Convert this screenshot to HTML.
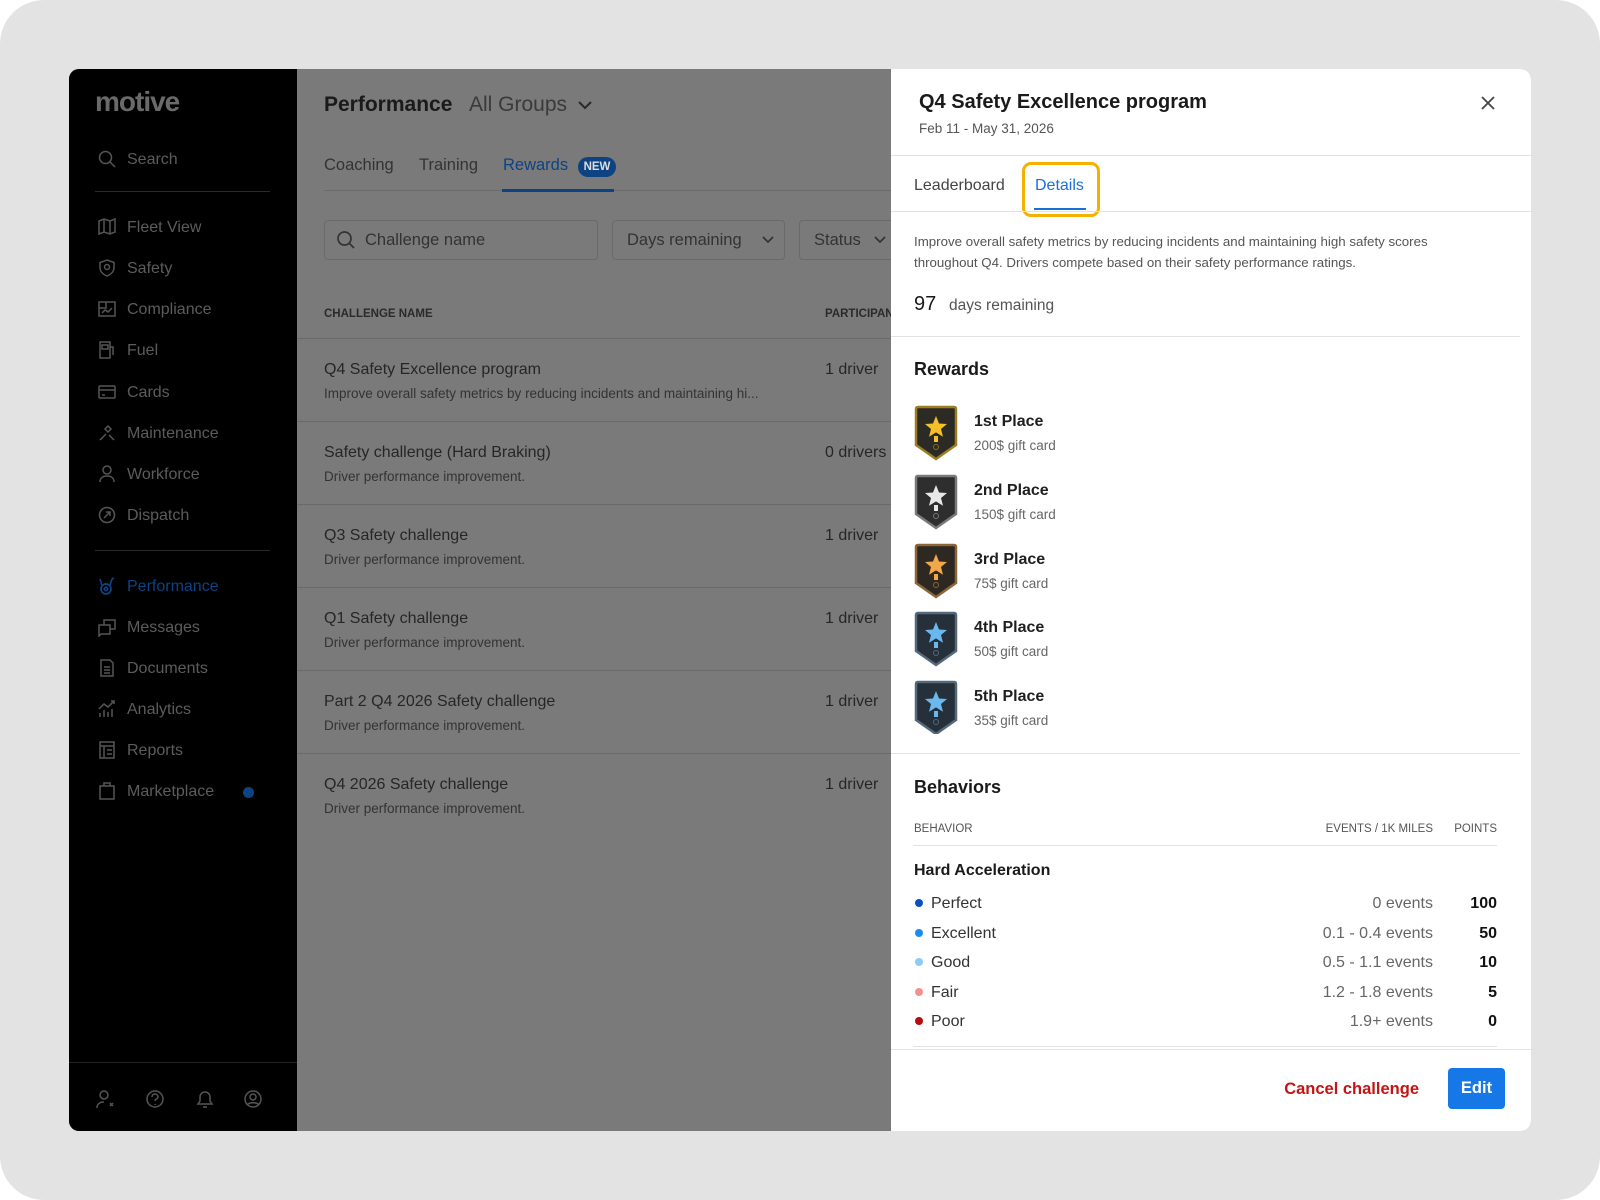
<!DOCTYPE html>
<html><head><meta charset="utf-8"><style>
*{margin:0;padding:0;box-sizing:border-box}
body{width:1600px;height:1200px;background:#fff;font-family:"Liberation Sans",sans-serif;position:relative;overflow:hidden}
.bg{position:absolute;left:0;top:0;width:1600px;height:1200px;background:#e3e3e3;border-radius:44px}
.frame{position:absolute;left:69px;top:69px;width:1462px;height:1062px;border-radius:10px;overflow:hidden;background:#7a7a7a}
.a{position:absolute;white-space:nowrap}
.side{position:absolute;left:0;top:0;width:228px;height:1062px;background:#000}
.nav{position:absolute;left:28px;width:190px;font-size:16px;color:#5c5c5c;line-height:20px;height:20px;white-space:nowrap}
.nav svg{position:absolute;left:0;top:0;width:20px;height:20px;fill:none;stroke:#555;stroke-width:1.5}
.nav span{position:absolute;left:30px;top:1px;white-space:nowrap}
.main{position:absolute;left:228px;top:0;width:594px;height:1062px;background:#7a7a7a;color:#262626}
.panel{position:absolute;left:822px;top:0;width:640px;height:1062px;background:#fff;color:#1f1f1f}
.rt{font-size:16px;color:#262626}
.rd{font-size:13.5px;color:#333}
.pl{font-size:16px;font-weight:bold;color:#1f1f1f}
.gc{font-size:13.5px;color:#666}
.br{position:absolute;font-size:16px;color:#333;line-height:20px}
.dot{position:absolute;width:8px;height:8px;border-radius:50%}
</style></head><body>
<div class="bg"></div>
<div class="frame">
 <div class="side">
  <div class="a" style="left:26px;top:17px;font-size:28px;font-weight:bold;color:#6a6a6a;letter-spacing:-1px">motive</div>
  <div class="nav" style="top:80px"><svg viewBox="0 0 20 20"><circle cx="8.5" cy="8.5" r="6"/><path d="M13 13l5 5"/></svg><span>Search</span></div>
  <div class="a" style="left:26px;top:122px;width:175px;height:1px;background:#2a2a2a"></div>
  <div class="nav" style="top:148px"><svg viewBox="0 0 20 20"><path d="M2 4l5-2 6 2 5-2v13l-5 2-6-2-5 2z M7 2v13 M13 4v13"/></svg><span>Fleet View</span></div>
  <div class="nav" style="top:189px"><svg viewBox="0 0 20 20"><path d="M10 2l7 2.5v5c0 4-3 7-7 8.5-4-1.5-7-4.5-7-8.5v-5z"/><circle cx="10" cy="9" r="2.5"/></svg><span>Safety</span></div>
  <div class="nav" style="top:230px"><svg viewBox="0 0 20 20"><rect x="2" y="3" width="16" height="14"/><path d="M2 9h7V3 M5 14l3-3 3 2 4-4"/></svg><span>Compliance</span></div>
  <div class="nav" style="top:271px"><svg viewBox="0 0 20 20"><path d="M3 2h10v16H3z M13 7h3v8 M5 5h6v4H5z"/></svg><span>Fuel</span></div>
  <div class="nav" style="top:313px"><svg viewBox="0 0 20 20"><rect x="2" y="4" width="16" height="12" rx="1"/><path d="M2 8h16 M5 13h3"/></svg><span>Cards</span></div>
  <div class="nav" style="top:354px"><svg viewBox="0 0 20 20"><path d="M3 17l6-6 M11 3l3 3-3 3-3-3z M12 12l5 5"/></svg><span>Maintenance</span></div>
  <div class="nav" style="top:395px"><svg viewBox="0 0 20 20"><circle cx="10" cy="6" r="4"/><path d="M3 18c0-4 3-6 7-6s7 2 7 6"/></svg><span>Workforce</span></div>
  <div class="nav" style="top:436px"><svg viewBox="0 0 20 20"><circle cx="10" cy="10" r="7.5"/><path d="M7 13l6-6 M9 7h4v4"/></svg><span>Dispatch</span></div>
  <div class="a" style="left:26px;top:481px;width:175px;height:1px;background:#2a2a2a"></div>
  <div class="nav" style="top:507px;color:#0d4383"><svg viewBox="0 0 20 20" style="stroke:#0d4383;stroke-width:1.7"><circle cx="9" cy="13" r="5"/><circle cx="9" cy="13" r="1.6"/><path d="M5 9L3 3 M13 9l2-6 M15 3l2-1"/></svg><span>Performance</span></div>
  <div class="nav" style="top:548px"><svg viewBox="0 0 20 20"><path d="M2 8h11v9H4l-2 2z M7 8V3h11v9h-5"/></svg><span>Messages</span></div>
  <div class="nav" style="top:589px"><svg viewBox="0 0 20 20"><path d="M4 2h9l3 3v13H4z M7 9h6 M7 12h6 M7 15h6"/></svg><span>Documents</span></div>
  <div class="nav" style="top:630px"><svg viewBox="0 0 20 20"><path d="M3 18v-4 M7 18v-7 M11 18v-5 M15 18v-8 M2 10l5-5 4 3 6-6 M14 2h3v3"/></svg><span>Analytics</span></div>
  <div class="nav" style="top:671px"><svg viewBox="0 0 20 20"><rect x="3" y="2" width="14" height="16"/><path d="M3 6h14 M7 6v12 M10 10h5 M10 14h5"/></svg><span>Reports</span></div>
  <div class="nav" style="top:712px"><svg viewBox="0 0 20 20"><path d="M3 5h14v13H3z M7 5V2h6v3"/></svg><span>Marketplace</span></div>
  <div class="dot" style="left:174px;top:718px;width:11px;height:11px;background:#0d4383"></div>
  <div class="a" style="left:0;top:993px;width:228px;height:1px;background:#222"></div>
  <svg width="200" height="24" style="position:absolute;left:26px;top:1019px" fill="none" stroke="#555" stroke-width="1.5">
   <circle cx="9" cy="7" r="4"/><path d="M2 20c0-4 3-6 7-6 M15 15l3 3 M18 15l-3 3"/>
   <circle cx="60" cy="11" r="8"/><path d="M57 9c0-2 1.5-3 3-3s3 1 3 3-3 2-3 4 M60 16v1"/>
   <path d="M103 16h14l-2-3v-4a5 5 0 0 0-10 0v4z M108 19h4"/>
   <circle cx="158" cy="11" r="8"/><circle cx="158" cy="9" r="3"/><path d="M152 17c2-3 10-3 12 0"/>
  </svg>
 </div>
 <div class="main">
  <div class="a" style="left:27px;top:24px;font-size:21px;font-weight:bold;color:#1a1a1a">Performance</div>
  <div class="a" style="left:172px;top:24px;font-size:21px;color:#3a3a3a">All Groups</div>
  <svg style="position:absolute;left:280px;top:30px" width="16" height="12" fill="none" stroke="#2a2a2a" stroke-width="2"><path d="M2 3l6 6 6-6"/></svg>
  <div class="a" style="left:27px;top:87px;font-size:16.5px;color:#333">Coaching</div>
  <div class="a" style="left:122px;top:87px;font-size:16.5px;color:#333">Training</div>
  <div class="a" style="left:206px;top:87px;font-size:16.5px;color:#0d4383">Rewards</div>
  <div class="a" style="left:281px;top:88px;width:38px;height:20px;border-radius:10px;background:#0d4383;color:#ddd;font-size:11.5px;font-weight:bold;text-align:center;line-height:20px">NEW</div>
  <div class="a" style="left:27px;top:121px;width:567px;height:1px;background:#6a6a6a"></div>
  <div class="a" style="left:205px;top:120px;width:112px;height:3px;background:#0d4383"></div>
  <div class="a" style="left:27px;top:151px;width:274px;height:40px;border:1px solid #6a6a6a;border-radius:4px"></div>
  <svg style="position:absolute;left:39px;top:161px" width="20" height="20" fill="none" stroke="#333" stroke-width="1.7"><circle cx="8.5" cy="8.5" r="6.5"/><path d="M13 13l5 5"/></svg>
  <div class="a" style="left:68px;top:162px;font-size:16.5px;color:#333">Challenge name</div>
  <div class="a" style="left:315px;top:151px;width:173px;height:40px;border:1px solid #6a6a6a;border-radius:4px"></div>
  <div class="a" style="left:330px;top:162px;font-size:16.5px;color:#333">Days remaining</div>
  <svg style="position:absolute;left:464px;top:166px" width="14" height="10" fill="none" stroke="#333" stroke-width="1.7"><path d="M2 2l5 5 5-5"/></svg>
  <div class="a" style="left:502px;top:151px;width:120px;height:40px;border:1px solid #6a6a6a;border-radius:4px"></div>
  <div class="a" style="left:517px;top:162px;font-size:16.5px;color:#333">Status</div>
  <svg style="position:absolute;left:576px;top:166px" width="14" height="10" fill="none" stroke="#333" stroke-width="1.7"><path d="M2 2l5 5 5-5"/></svg>
  <div class="a" style="left:27px;top:239px;font-size:11.5px;font-weight:bold;color:#2a2a2a">CHALLENGE NAME</div>
  <div class="a" style="left:528px;top:239px;font-size:11.5px;font-weight:bold;color:#2a2a2a">PARTICIPAN</div>
  <div class="a" style="left:0;top:269px;width:594px;height:1px;background:#6a6a6a"></div>

  <div class="a rt" style="left:27px;top:292px">Q4 Safety Excellence program</div>
  <div class="a rd" style="left:27px;top:317px">Improve overall safety metrics by reducing incidents and maintaining hi...</div>
  <div class="a rt" style="left:528px;top:292px">1 driver</div>
  <div class="a" style="left:0;top:352px;width:594px;height:1px;background:#6a6a6a"></div>
  <div class="a rt" style="left:27px;top:375px">Safety challenge (Hard Braking)</div>
  <div class="a rd" style="left:27px;top:400px">Driver performance improvement.</div>
  <div class="a rt" style="left:528px;top:375px">0 drivers</div>
  <div class="a" style="left:0;top:435px;width:594px;height:1px;background:#6a6a6a"></div>
  <div class="a rt" style="left:27px;top:458px">Q3 Safety challenge</div>
  <div class="a rd" style="left:27px;top:483px">Driver performance improvement.</div>
  <div class="a rt" style="left:528px;top:458px">1 driver</div>
  <div class="a" style="left:0;top:518px;width:594px;height:1px;background:#6a6a6a"></div>
  <div class="a rt" style="left:27px;top:541px">Q1 Safety challenge</div>
  <div class="a rd" style="left:27px;top:566px">Driver performance improvement.</div>
  <div class="a rt" style="left:528px;top:541px">1 driver</div>
  <div class="a" style="left:0;top:601px;width:594px;height:1px;background:#6a6a6a"></div>
  <div class="a rt" style="left:27px;top:624px">Part 2 Q4 2026 Safety challenge</div>
  <div class="a rd" style="left:27px;top:649px">Driver performance improvement.</div>
  <div class="a rt" style="left:528px;top:624px">1 driver</div>
  <div class="a" style="left:0;top:684px;width:594px;height:1px;background:#6a6a6a"></div>
  <div class="a rt" style="left:27px;top:707px">Q4 2026 Safety challenge</div>
  <div class="a rd" style="left:27px;top:732px">Driver performance improvement.</div>
  <div class="a rt" style="left:528px;top:707px">1 driver</div>
 </div>

 <div class="panel">
  <div class="a" style="left:28px;top:22px;font-size:20px;font-weight:bold;color:#1a1a1a">Q4 Safety Excellence program</div>
  <div class="a" style="left:28px;top:52px;font-size:13.5px;color:#555">Feb 11 - May 31, 2026</div>
  <svg style="position:absolute;left:588px;top:25px" width="18" height="18" fill="none" stroke="#444" stroke-width="1.8"><path d="M3 3l12 12M15 3L3 15"/></svg>
  <div class="a" style="left:0;top:86px;width:640px;height:1px;background:#e3e3e3"></div>
  <div class="a" style="left:23px;top:108px;font-size:16px;color:#444">Leaderboard</div>
  <div class="a" style="left:131px;top:93px;width:78px;height:55px;border:3px solid #f6b000;border-radius:9px"></div>
  <div class="a" style="left:144px;top:108px;font-size:16px;color:#1a6fd8">Details</div>
  <div class="a" style="left:143px;top:139px;width:52px;height:2px;background:#1a6fd8"></div>
  <div class="a" style="left:0;top:142px;width:640px;height:1px;background:#e3e3e3"></div>
  <div class="a" style="left:23px;top:162px;font-size:13.3px;color:#555;line-height:21px;white-space:normal;width:580px">Improve overall safety metrics by reducing incidents and maintaining high safety scores throughout Q4. Drivers compete based on their safety performance ratings.</div>
  <div class="a" style="left:23px;top:224px;font-size:20px;color:#1a1a1a">97</div>
  <div class="a" style="left:58px;top:228px;font-size:15.5px;color:#555">days remaining</div>
  <div class="a" style="left:0;top:267px;width:629px;height:1px;background:#e3e3e3"></div>
  <div class="a" style="left:23px;top:290px;font-size:18px;font-weight:bold;color:#1a1a1a">Rewards</div>

  <svg style="position:absolute;left:22px;top:335px" width="48" height="330" viewBox="0 0 48 330">
   <defs>
    <path id="sh" d="M5 3h36q2 0 2 2v36L23 55 3 41V5q0-2 2-2z"/>
    <path id="st" d="M23 12l3 7.5 8 .5-6 5 2 7.8-7-4.4-7 4.4 2-7.8-6-5 8-.5z"/>
   </defs>
   <g><use href="#sh" fill="#2b2a24" stroke="#9c7d22" stroke-width="2.5"/><use href="#st" fill="#f5bf2a"/><path d="M21 32h4v6h-4z" fill="#f5bf2a"/><circle cx="23" cy="43" r="2.5" fill="none" stroke="#8a6d1e"/></g>
   <g transform="translate(0,69)"><use href="#sh" fill="#2e2e2e" stroke="#7a7a7a" stroke-width="2.5"/><use href="#st" fill="#e8e8e8"/><path d="M21 32h4v6h-4z" fill="#e8e8e8"/><circle cx="23" cy="43" r="2.5" fill="none" stroke="#777"/></g>
   <g transform="translate(0,138)"><use href="#sh" fill="#2d2822" stroke="#8c6538" stroke-width="2.5"/><use href="#st" fill="#f0a848"/><path d="M21 32h4v6h-4z" fill="#f0a848"/><circle cx="23" cy="43" r="2.5" fill="none" stroke="#8c6538"/></g>
   <g transform="translate(0,206)"><use href="#sh" fill="#26303a" stroke="#55697a" stroke-width="2.5"/><use href="#st" fill="#6bb8ec"/><path d="M21 32h4v6h-4z" fill="#6bb8ec"/><circle cx="23" cy="43" r="2.5" fill="none" stroke="#55697a"/></g>
   <g transform="translate(0,275)"><use href="#sh" fill="#26303a" stroke="#55697a" stroke-width="2.5"/><use href="#st" fill="#6bb8ec"/><path d="M21 32h4v6h-4z" fill="#6bb8ec"/><circle cx="23" cy="43" r="2.5" fill="none" stroke="#55697a"/></g>
  </svg>
  <div class="a pl" style="left:83px;top:344px">1st Place</div>
  <div class="a gc" style="left:83px;top:369px">200$ gift card</div>
  <div class="a pl" style="left:83px;top:413px">2nd Place</div>
  <div class="a gc" style="left:83px;top:438px">150$ gift card</div>
  <div class="a pl" style="left:83px;top:482px">3rd Place</div>
  <div class="a gc" style="left:83px;top:507px">75$ gift card</div>
  <div class="a pl" style="left:83px;top:550px">4th Place</div>
  <div class="a gc" style="left:83px;top:575px">50$ gift card</div>
  <div class="a pl" style="left:83px;top:619px">5th Place</div>
  <div class="a gc" style="left:83px;top:644px">35$ gift card</div>
  <div class="a" style="left:0;top:684px;width:629px;height:1px;background:#e3e3e3"></div>
  <div class="a" style="left:23px;top:708px;font-size:18px;font-weight:bold;color:#1a1a1a">Behaviors</div>
  <div class="a" style="left:23px;top:754px;font-size:11.5px;color:#555">BEHAVIOR</div>
  <div class="a" style="right:98px;top:754px;font-size:11.5px;color:#555">EVENTS / 1K MILES</div>
  <div class="a" style="right:34px;top:754px;font-size:11.5px;color:#555">POINTS</div>
  <div class="a" style="left:22px;top:776px;width:584px;height:1px;background:#e3e3e3"></div>
  <div class="a" style="left:23px;top:793px;font-size:16px;font-weight:bold;color:#1a1a1a">Hard Acceleration</div>

  <div class="dot" style="left:24px;top:830px;background:#0b4fc4"></div><div class="br" style="left:40px;top:825px">Perfect</div>
  <div class="br" style="right:98px;top:825px;color:#666">0 events</div><div class="br" style="right:34px;top:825px;font-weight:bold;color:#111">100</div>
  <div class="dot" style="left:24px;top:860px;background:#1a8cf0"></div><div class="br" style="left:40px;top:855px">Excellent</div>
  <div class="br" style="right:98px;top:855px;color:#666">0.1 - 0.4 events</div><div class="br" style="right:34px;top:855px;font-weight:bold;color:#111">50</div>
  <div class="dot" style="left:24px;top:889px;background:#8ccaf8"></div><div class="br" style="left:40px;top:884px">Good</div>
  <div class="br" style="right:98px;top:884px;color:#666">0.5 - 1.1 events</div><div class="br" style="right:34px;top:884px;font-weight:bold;color:#111">10</div>
  <div class="dot" style="left:24px;top:919px;background:#f59090"></div><div class="br" style="left:40px;top:914px">Fair</div>
  <div class="br" style="right:98px;top:914px;color:#666">1.2 - 1.8 events</div><div class="br" style="right:34px;top:914px;font-weight:bold;color:#111">5</div>
  <div class="dot" style="left:24px;top:948px;background:#b50d0d"></div><div class="br" style="left:40px;top:943px">Poor</div>
  <div class="br" style="right:98px;top:943px;color:#666">1.9+ events</div><div class="br" style="right:34px;top:943px;font-weight:bold;color:#111">0</div>
  <div class="a" style="left:22px;top:977px;width:584px;height:1px;background:#e3e3e3"></div>
  <div class="a" style="left:0;top:980px;width:640px;height:1px;background:#e3e3e3"></div>
  <div class="a" style="right:112px;top:1011px;font-size:16.5px;font-weight:bold;color:#c41515">Cancel challenge</div>
  <div class="a" style="left:557px;top:999px;width:57px;height:41px;background:#1677e6;border-radius:4px;color:#fff;font-size:16.5px;font-weight:bold;text-align:center;line-height:41px">Edit</div>
 </div>
</div>
</body></html>
